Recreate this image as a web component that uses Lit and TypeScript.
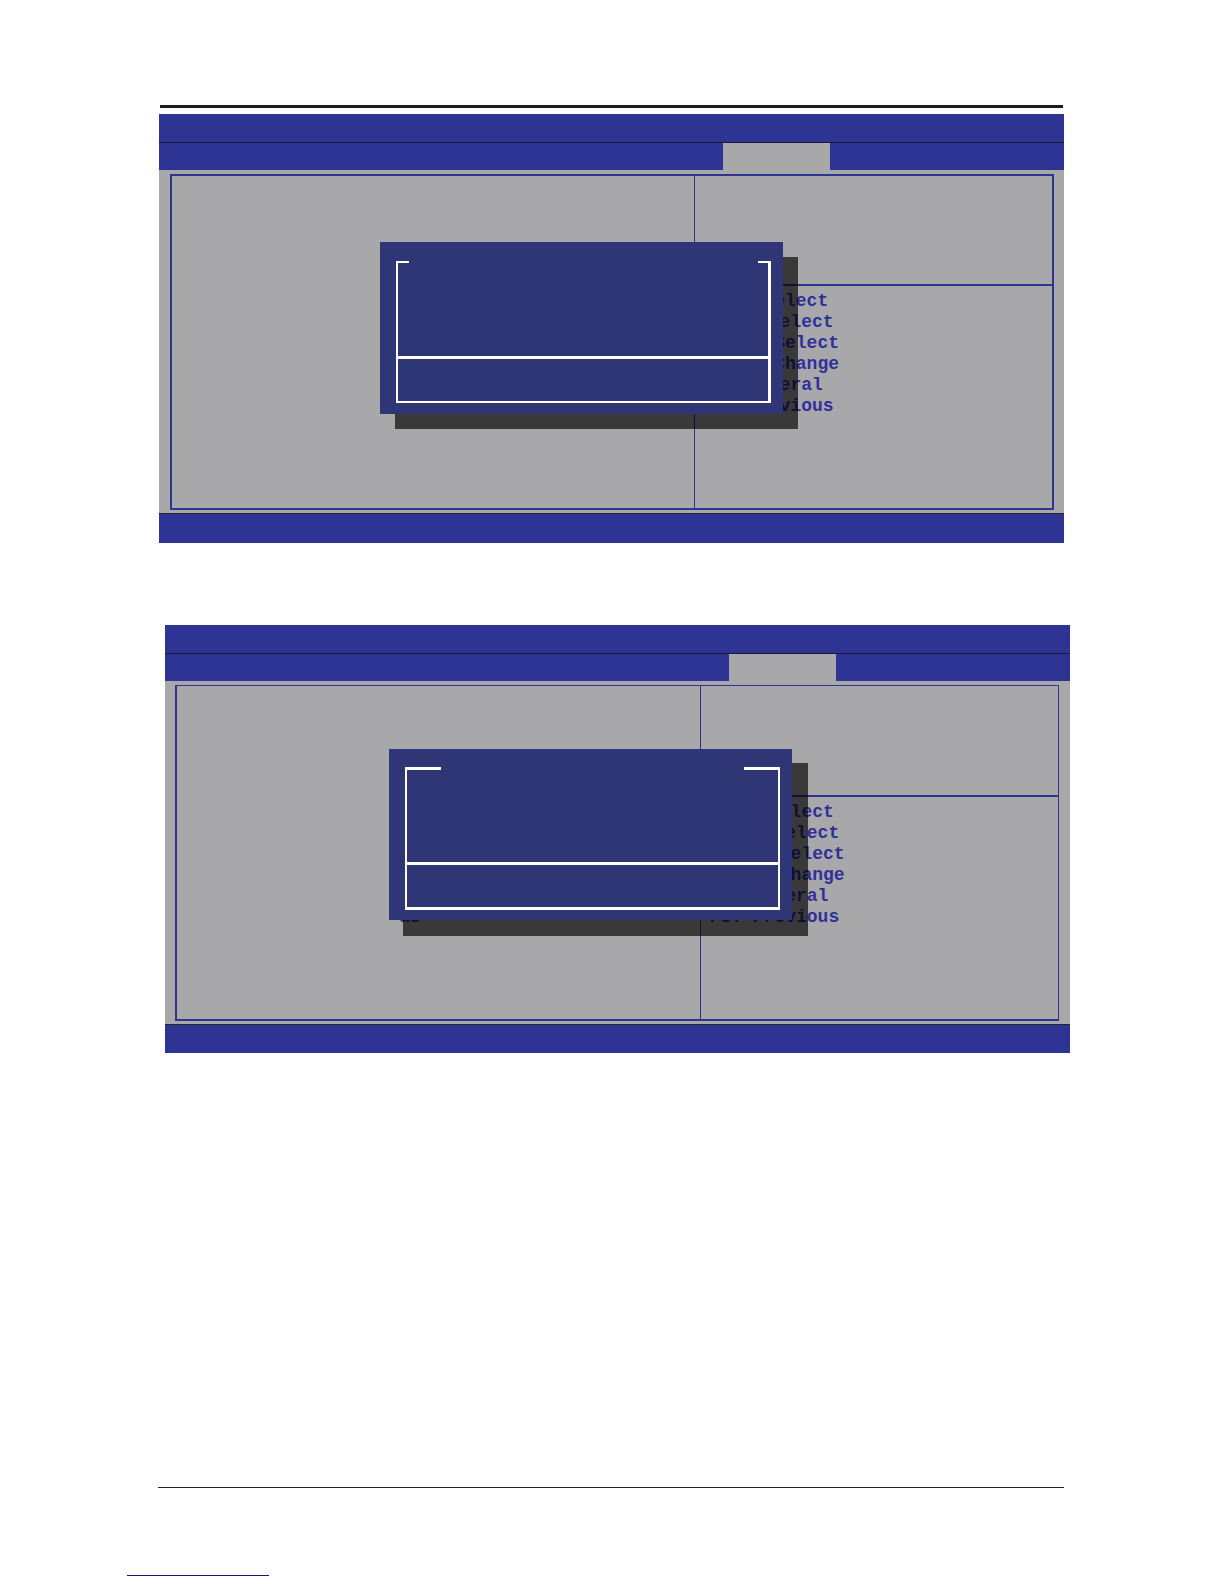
import { LitElement, html, css, nothing } from "lit";
import { customElement, property } from "lit/decorators.js";
import { styleMap } from "lit/directives/style-map.js";

interface HelpLine {
  key?: string;
  label: string;
  /* distance from the pane's text edge, in half character cells */
  indent: number;
}

const HELP: HelpLine[] = [
  { label: "Select", indent: 11 },
  { label: "Select", indent: 12 },
  { label: "Select", indent: 13 },
  { label: "Change", indent: 13 },
  { label: "General", indent: 8 },
  { label: "Previous", indent: 8 },
];

const HELP_WITH_KEY: HelpLine[] = [
  ...HELP.slice(0, 5),
  { key: "F3: ", label: "Previous", indent: 0 },
];

@customElement("bios-dialog")
class BiosDialog extends LitElement {
  static styles = css`
    :host {
      display: block;
      box-sizing: border-box;
      padding: 18px 11px 11px 16px;
      background: #2e3676;
      border: solid #2e3288;
      border-width: 1px 1px 0 0;
      box-shadow: 15px 15px 0 rgba(0, 0, 0, 0.66);
    }
    :host([wide]) {
      padding: 17px 11px 10px 16px;
      box-shadow: 15px 15px 0 1px rgba(0, 0, 0, 0.66);
    }
    .box {
      display: flex;
      flex-direction: column;
      height: 100%;
    }
    .corners {
      display: flex;
      justify-content: space-between;
    }
    .corner {
      width: 13px;
      height: 2px;
      background: #fff;
    }
    .message,
    .actions {
      border: solid #fff;
      border-width: 0 3px 3px 2px;
    }
    .message {
      flex: 1;
    }
    .actions {
      height: 42px;
      border-bottom-width: 2px;
    }
    :host([wide]) .corner {
      width: 36px;
      height: 3px;
    }
    :host([wide]) .message,
    :host([wide]) .actions {
      border-width: 0 2px 3px;
    }
  `;

  render() {
    return html`
      <div class="box">
        <div class="corners">
          <div class="corner"></div>
          <div class="corner"></div>
        </div>
        <div class="message"></div>
        <div class="actions"></div>
      </div>
    `;
  }
}

@customElement("bios-screen")
class BiosScreen extends LitElement {
  @property({ attribute: false }) help: HelpLine[] = [];
  @property() note = "";
  @property({ type: Boolean, reflect: true }) thin = false;

  static styles = css`
    :host {
      display: block;
      position: relative;
      background: #a8a8aa;
      color: #30309a;
      font: bold 18px/21px "Liberation Mono", monospace;
    }
    .title {
      height: 28px;
      background: #2e3494;
      border-bottom: 1px solid #1d1b33;
    }
    .tabs {
      display: grid;
      grid-template-columns: 564fr 107fr 234fr;
      height: 27px;
    }
    .tab {
      background: #2e3494;
    }
    .tab.active {
      background: #a8a8aa;
    }
    .body {
      padding: 4px 10px 3px 11px;
    }
    .frame {
      display: grid;
      grid-template-columns: 522fr 358fr;
      box-sizing: border-box;
      height: 336px;
      border: 2px solid #2e3490;
    }
    :host([thin]) .body {
      padding: 4px 11px 3px 10px;
    }
    :host([thin]) .frame {
      border-top-width: 1px;
      border-right-width: 1px;
    }
    .main {
      padding: 221px 0 0 222px;
    }
    .side {
      border-left: 1px solid #2e3490;
    }
    .hint {
      height: 108px;
      border-bottom: 2px solid #2e3490;
    }
    :host([thin]) .hint {
      height: 109px;
    }
    .keys {
      margin: 0;
      padding: 5px 9px;
      list-style: none;
    }
    .line {
      white-space: pre;
    }
    .foot {
      height: 29px;
      background: #2e3494;
      border-top: 1px solid #25232f;
    }
    :host([thin]) .foot {
      height: 28px;
    }
  `;

  render() {
    return html`
      <div class="title"></div>
      <div class="tabs">
        <div class="tab"></div>
        <div class="tab active"></div>
        <div class="tab"></div>
      </div>
      <div class="body">
        <div class="frame">
          <div class="main">${this.note}</div>
          <div class="side">
            <div class="hint"></div>
            <ul class="keys">
              ${this.help.map(
                (line) => html`<li class="line" style=${styleMap({ paddingLeft: `calc(${line.indent} * 0.5ch)` })}>${line.key ?? nothing}${line.label}</li>`,
              )}
            </ul>
          </div>
        </div>
      </div>
      <div class="foot"></div>
      <slot></slot>
    `;
  }
}

@customElement("app-root")
class AppRoot extends LitElement {
  static styles = css`
    :host {
      display: block;
    }
    .page {
      display: flex;
      flex-direction: column;
      box-sizing: border-box;
      min-height: 100vh;
      padding: 105px 160px 8px 159px;
      background: #fff;
    }
    .top-rule {
      height: 3px;
      margin: 0 1px 6px;
      background: #1c1e1d;
    }
    .second {
      margin: 82px -6px 0 6px;
    }
    .dialog {
      position: absolute;
      top: 128px;
      left: 221px;
      width: 403px;
      height: 172px;
    }
    .second .dialog {
      top: 124px;
      left: 224px;
      height: 171px;
    }
    .bottom {
      margin-top: auto;
    }
    .bottom-rule {
      height: 1px;
      margin: 0 0 87px -1px;
      background: #231f20;
    }
    .link-rule {
      width: 142px;
      height: 1px;
      margin-left: -32px;
      background: #14148c;
    }
  `;

  render() {
    return html`
      <main class="page">
        <div class="top-rule"></div>
        <bios-screen .help=${HELP}>
          <bios-dialog class="dialog"></bios-dialog>
        </bios-screen>
        <bios-screen class="second" thin note="as" .help=${HELP_WITH_KEY}>
          <bios-dialog class="dialog" wide></bios-dialog>
        </bios-screen>
        <div class="bottom">
          <div class="bottom-rule"></div>
          <div class="link-rule"></div>
        </div>
      </main>
    `;
  }
}
